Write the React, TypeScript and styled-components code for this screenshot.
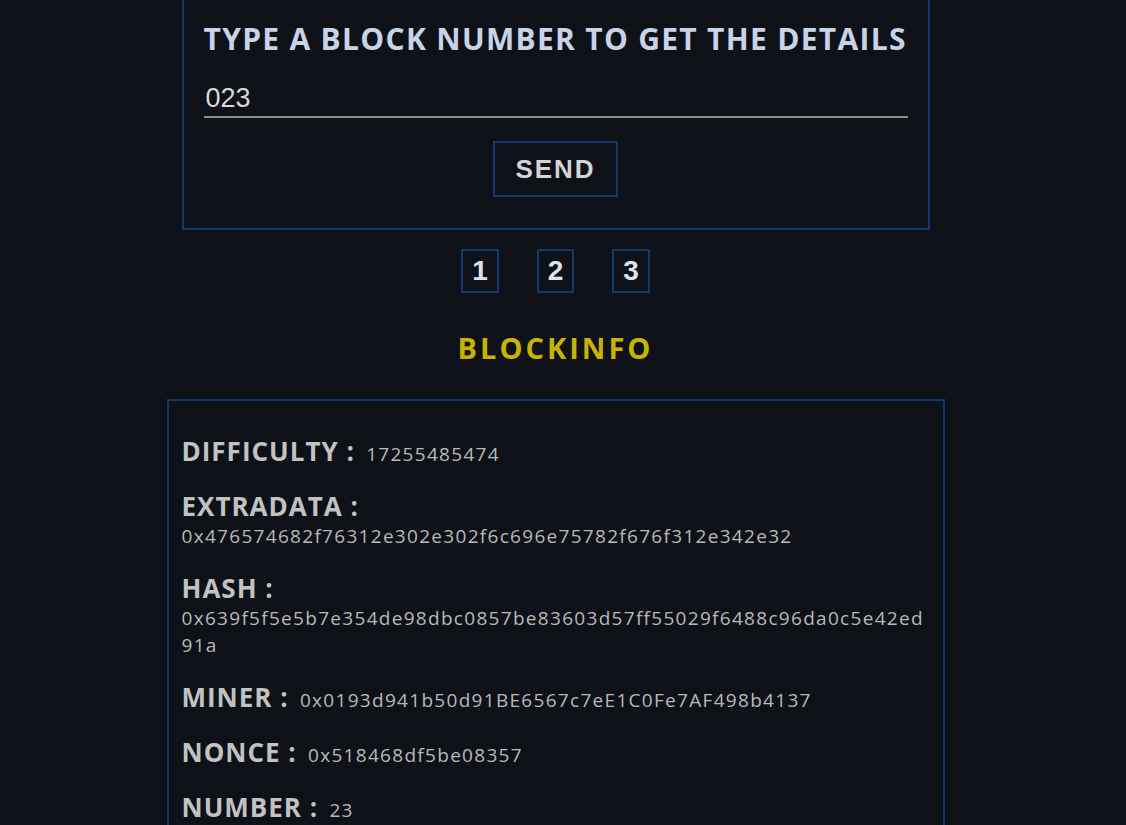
import React, { useState } from "react";
import styled, { createGlobalStyle } from "styled-components";

const Global = createGlobalStyle`
  html, body {
    margin: 0;
    padding: 0;
    background: #0e1117;
    overflow: hidden;
    height: 100%;
  }
  * { box-sizing: border-box; }
`;

const Page = styled.main`
  display: flex;
  flex-direction: column;
  align-items: center;
  padding-right: 15px;
  margin-top: -11px;
  font-family: "Open Sans", "Noto Sans", sans-serif;
`;

const FormBox = styled.form`
  width: 748px;
  border: 2px solid #113a6b;
  padding: 20px 20px 31px;
  display: flex;
  flex-direction: column;
  align-items: center;
`;

const Title = styled.h2`
  margin: 10px 0 0;
  align-self: stretch;
  font-family: "Open Sans", sans-serif;
  font-weight: 700;
  font-size: 30px;
  line-height: 36px;
  letter-spacing: 1.3px;
  color: #c8d3e8;
  white-space: nowrap;
`;

const Input = styled.input`
  margin-top: 26px;
  width: 100%;
  background: transparent;
  border: none;
  border-bottom: 2px solid #8a8a8a;
  outline: none;
  padding: 0 2px 2px;
  font-family: "Liberation Sans", Arial, sans-serif;
  font-size: 27px;
  line-height: 31px;
  height: 35px;
  color: #d8d8d8;
`;

const SendButton = styled.button`
  margin-top: 23px;
  background: transparent;
  border: 2px solid #113a6b;
  padding: 11px 20px;
  font-family: "Liberation Sans", Arial, sans-serif;
  font-weight: 700;
  font-size: 26px;
  line-height: 30px;
  letter-spacing: 2px;
  color: #d4d4d4;
  cursor: pointer;
`;

const Pager = styled.nav`
  margin-top: 19px;
  display: flex;
  gap: 38px;
`;

const PageButton = styled.button`
  background: transparent;
  border: 2px solid #113a6b;
  padding: 4px 9px;
  font-family: "Liberation Sans", Arial, sans-serif;
  font-weight: 700;
  font-size: 28px;
  line-height: 32px;
  color: #dde3ec;
  cursor: pointer;
`;

const SectionTitle = styled.h1`
  margin: 35px 0 0;
  font-family: "Open Sans", sans-serif;
  font-weight: 700;
  font-size: 29px;
  line-height: 40px;
  letter-spacing: 3px;
  color: #c7b300;
`;

const InfoBox = styled.section`
  margin-top: 31px;
  width: 778px;
  border: 2px solid #113a6b;
  padding: 37px 16px 20px 13px;
`;

const Item = styled.p`
  margin: 0 0 25px;
  font-family: "Open Sans", sans-serif;
  font-size: 19px;
  line-height: 27px;
  letter-spacing: 1.3px;
  color: #b9b9b9;
  overflow-wrap: break-word;
`;

const Label = styled.span`
  font-weight: 700;
  font-size: 26px;
  color: #c2c2c2;
  letter-spacing: 1px;
  margin-right: 5px;
`;

const info: [string, string][] = [
  ["DIFFICULTY", "17255485474"],
  ["EXTRADATA", "0x476574682f76312e302e302f6c696e75782f676f312e342e32"],
  ["HASH", "0x639f5f5e5b7e354de98dbc0857be83603d57ff55029f6488c96da0c5e42ed91a"],
  ["MINER", "0x0193d941b50d91BE6567c7eE1C0Fe7AF498b4137"],
  ["NONCE", "0x518468df5be08357"],
  ["NUMBER", "23"],
];

export default function App() {
  const [value, setValue] = useState("023");
  return (
    <>
      <Global />
      <Page>
        <FormBox onSubmit={(e) => e.preventDefault()}>
          <Title>TYPE A BLOCK NUMBER TO GET THE DETAILS</Title>
          <Input value={value} onChange={(e) => setValue(e.target.value)} />
          <SendButton type="submit">SEND</SendButton>
        </FormBox>
        <Pager>
          <PageButton>1</PageButton>
          <PageButton>2</PageButton>
          <PageButton>3</PageButton>
        </Pager>
        <SectionTitle>BLOCKINFO</SectionTitle>
        <InfoBox>
          {info.map(([k, v]) => (
            <Item key={k}>
              <Label>{k} :</Label> {v}
            </Item>
          ))}
        </InfoBox>
      </Page>
    </>
  );
}
